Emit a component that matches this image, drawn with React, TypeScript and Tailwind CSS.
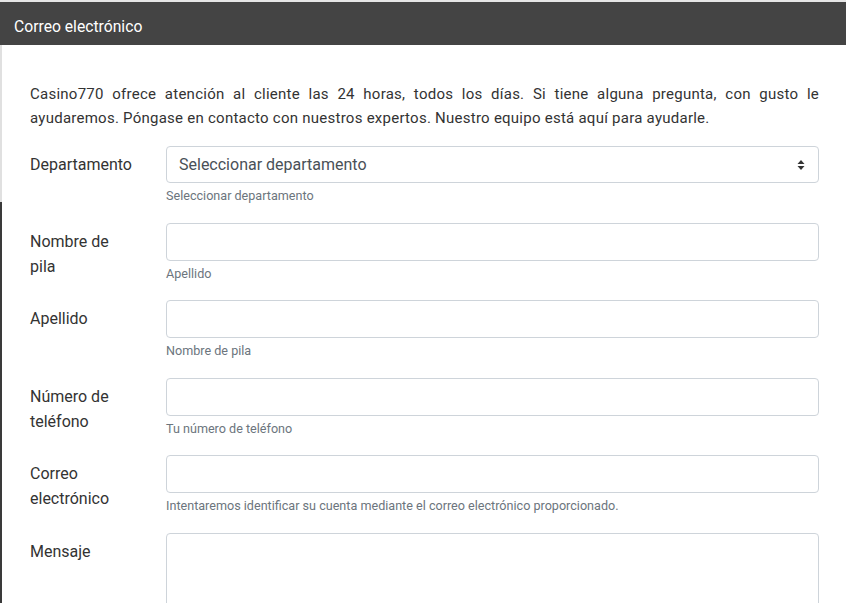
import { ReactNode } from 'react';

const FIELDS = [
  { label: 'Nombre de pila', help: 'Apellido' },
  { label: 'Apellido', help: 'Nombre de pila' },
  { label: 'Número de teléfono', help: 'Tu número de teléfono' },
  {
    label: 'Correo electrónico',
    help: 'Intentaremos identificar su cuenta mediante el correo electrónico proporcionado.',
  },
];

function Row({ label, help, children }: { label: string; help?: string; children: ReactNode }) {
  return (
    <div className="flex gap-[31px] mb-[17.6px]">
      <label className="w-[105px] shrink-0 pt-[6px] text-[16px] leading-[25px] text-[#333]">
        {label}
      </label>
      <div className="flex-1 min-w-0">
        {children}
        {help && (
          <p className="mt-[4px] text-[12.6px] leading-[18px] text-[#6c757d]">{help}</p>
        )}
      </div>
    </div>
  );
}

function SortArrows() {
  return (
    <svg width="8" height="12" viewBox="0 0 8 12" className="fill-[#333]">
      <path d="M4 1 L7.5 5 H0.5 Z" />
      <path d="M4 11 L7.5 7 H0.5 Z" />
    </svg>
  );
}

export default function App() {
  return (
    <div className="w-[846px] h-[603px] overflow-hidden bg-white flex flex-col font-['Roboto',sans-serif]">
      <div className="h-[2px] shrink-0 bg-[#e6e6e6]" />
      <header className="h-[43px] shrink-0 bg-[#444444] flex items-center px-[14px] pt-[6px]">
        <span className="text-[15.7px] text-white">Correo electrónico</span>
      </header>

      <div className="flex flex-1 min-h-0">
        {/* left edge line */}
        <div className="w-[2px] shrink-0 flex flex-col">
          <div className="h-[157px] bg-[#e0e0e0]" />
          <div className="flex-1 bg-[#3a3a3a]" />
        </div>

        <main className="flex-1 pl-[28px] pr-[27px] pt-[37px]">
          <p className="text-[15px] tracking-[0.25px] leading-[24px] text-[#333] text-justify mb-[16px]">
            Casino770 ofrece atención al cliente las 24 horas, todos los días. Si tiene alguna
            pregunta, con gusto le ayudaremos. Póngase en contacto con nuestros expertos. Nuestro
            equipo está aquí para ayudarle.
          </p>

          <Row label="Departamento" help="Seleccionar departamento">
            <div className="h-[37px] border border-[#ced4da] rounded-[4px] flex items-center justify-between pl-[12px] pr-[13px]">
              <span className="text-[16px] text-[#495057]">Seleccionar departamento</span>
              <SortArrows />
            </div>
          </Row>

          {FIELDS.map((f) => (
            <Row key={f.label} label={f.label} help={f.help}>
              <div className="h-[38px] border border-[#ced4da] rounded-[4px]" />
            </Row>
          ))}

          <Row label="Mensaje">
            <div className="h-[130px] border border-[#ced4da] rounded-[4px]" />
          </Row>
        </main>
      </div>
    </div>
  );
}
